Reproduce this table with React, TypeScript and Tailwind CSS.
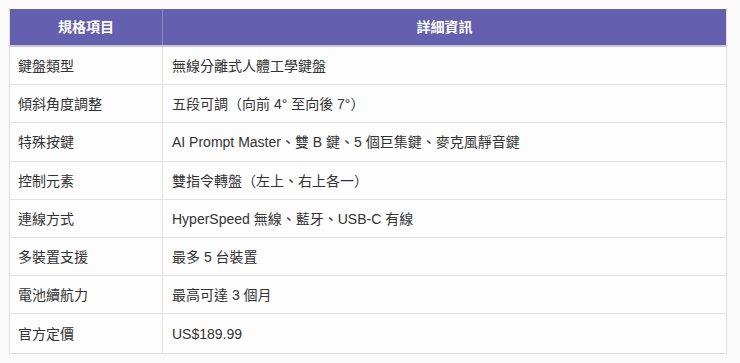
import React from "react";

const rows: [string, string][] = [
  ["鍵盤類型", "無線分離式人體工學鍵盤"],
  ["傾斜角度調整", "五段可調（向前 4° 至向後 7°）"],
  ["特殊按鍵", "AI Prompt Master、雙 B 鍵、5 個巨集鍵、麥克風靜音鍵"],
  ["控制元素", "雙指令轉盤（左上、右上各一）"],
  ["連線方式", "HyperSpeed 無線、藍牙、USB-C 有線"],
  ["多裝置支援", "最多 5 台裝置"],
  ["電池續航力", "最高可達 3 個月"],
  ["官方定價", "US$189.99"],
];

export default function App() {
  return (
    <div
      className="w-[740px] h-[363px] bg-[#fafafa] pt-[9px] pl-[9px]"
      style={{ fontFamily: '"Liberation Sans", "Noto Sans CJK TC", sans-serif' }}
    >
      <div className="w-[718px] text-[14px] text-[#333] bg-[#fdfdfd] border-x border-b border-[#dedede] flex flex-col">
        <div className="flex h-[38px] bg-[#645fae] text-white font-bold border-b-2 border-[#c9c9d6]">
          <div className="w-[153px] flex items-center justify-center border-r border-[#8f8bc8]">規格項目</div>
          <div className="flex-1 flex items-center justify-center">詳細資訊</div>
        </div>
        {rows.map(([k, v]) => (
          <div key={k} className="flex h-[38.2px] border-b border-[#e3e3e3] last:border-b-0">
            <div className="w-[153px] flex items-center pt-[2px] pl-[8px] border-r border-[#e3e3e3]">{k}</div>
            <div className="flex-1 flex items-center pt-[2px] pl-[9px]">{v}</div>
          </div>
        ))}
      </div>
    </div>
  );
}
